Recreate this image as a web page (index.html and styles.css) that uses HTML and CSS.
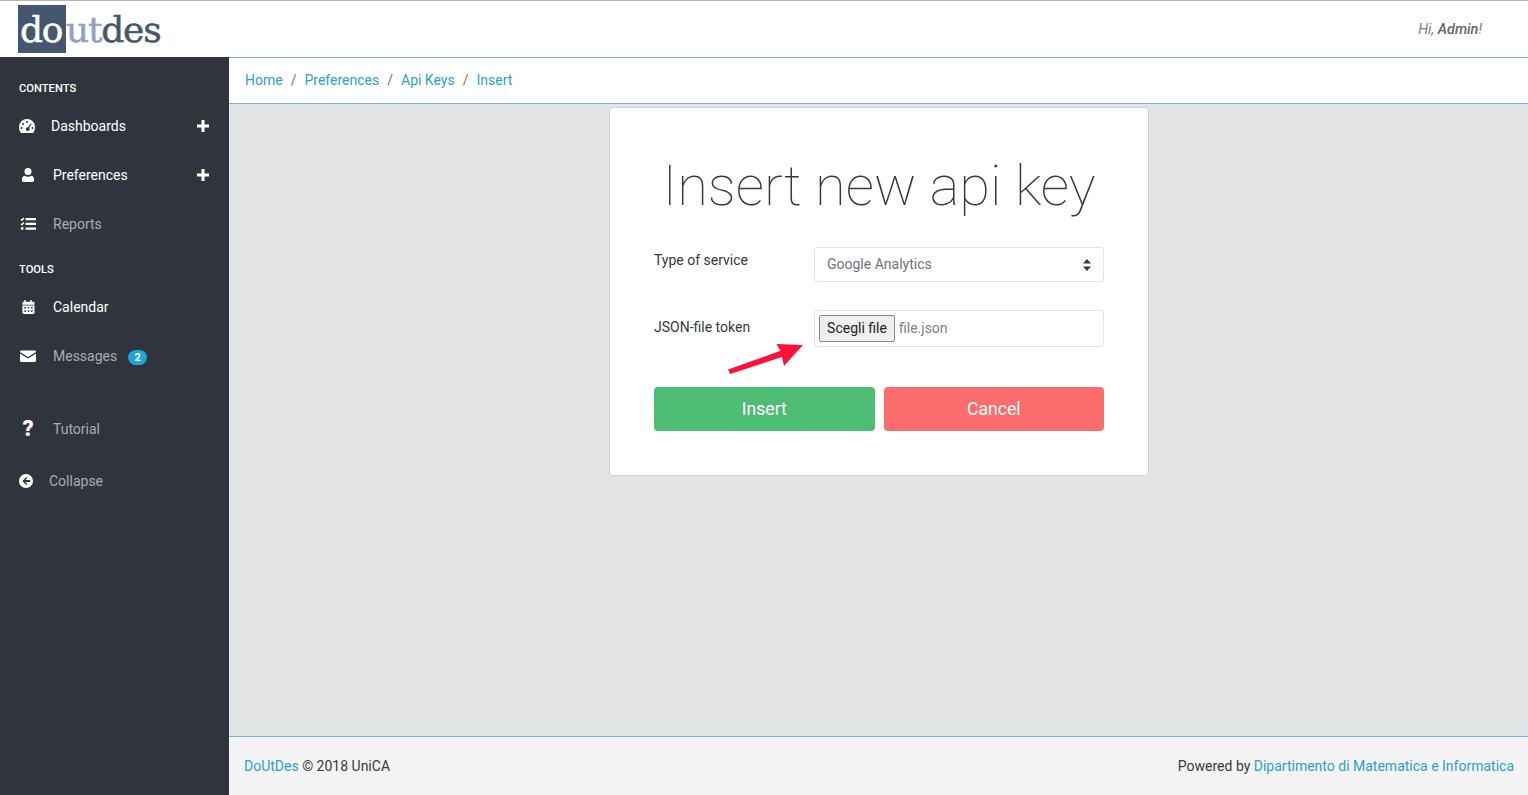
FILE: index.html
```html
<!DOCTYPE html>
<html lang="en">
<head>
    <meta charset="UTF-8">
    <meta name="viewport" content="width=device-width, initial-scale=1.0">
    <title>DoUtDes - Insert new api key</title>
    <link rel="stylesheet" href="styles.css">
</head>
<body>

    <header class="topbar">
        <a class="logo" href="#"><span class="logo-box">do</span><span class="logo-ut">ut</span><span class="logo-des">des</span></a>
        <div class="greeting">Hi, <b>Admin</b>!</div>
    </header>

    <div class="page">
        <nav class="sidebar">
            <div class="nav-title nav-title-first">Contents</div>
            <a class="nav-item nav-open" href="#">
                <svg class="nav-icon icon-gauge" viewBox="0 0 16 14"><path fill="#fff" fill-rule="evenodd" d="M8 0a8 8 0 0 1 8 8c0 2-.6 4-1.600 5.400-.2.4-.5.6-.9.6H2.500c-.4 0-.7-.2-.9-.6A9.500 9.500 0 0 1 0 8a8 8 0 0 1 8-8zM8 2a1 1 0 1 0 0 2 1 1 0 0 0 0-2zM4 4a1 1 0 1 0 0 2 1 1 0 0 0 0-2zM12 4.500 9 8.200a1.800 1.800 0 1 0 1.200.7l2.600-3.900zM2.500 8a1 1 0 1 0 0 2 1 1 0 0 0 0-2zM13.500 8a1 1 0 1 0 0 2 1 1 0 0 0 0-2z"/></svg>
                <span>Dashboards</span>
                <svg class="nav-plus" viewBox="0 0 12 12"><path fill="#fff" d="M4.500 0h3v4.500H12v3H7.500V12h-3V7.500H0v-3h4.500z"/></svg>
            </a>
            <a class="nav-item nav-open" href="#">
                <svg class="nav-icon" viewBox="0 0 18 14"><path fill="#fff" d="M9 0a3.500 3.500 0 1 1 0 7 3.500 3.500 0 0 1 0-7zM5.500 7.800c1 .6 2.200.9 3.500.9s2.500-.3 3.500-.9c1.700.2 2.500 1.700 2.500 3.300v1.500c0 .8-.6 1.400-1.400 1.400H4.400C3.600 14 3 13.400 3 12.600v-1.500c0-1.600.8-3.100 2.500-3.300z"/></svg>
                <span>Preferences</span>
                <svg class="nav-plus" viewBox="0 0 12 12"><path fill="#fff" d="M4.500 0h3v4.500H12v3H7.500V12h-3V7.500H0v-3h4.500z"/></svg>
            </a>
            <a class="nav-item" href="#">
                <svg class="nav-icon" viewBox="0 0 18 14"><path fill="none" stroke="#fff" stroke-width="1.300" d="M2 2.200l1 1 1.800-2.200M2 6.700l1 1 1.800-2.200"/><circle cx="3.200" cy="11.500" r="1.400" fill="#fff"/><path fill="#fff" d="M6.500 1h10.500v2.200H6.500zM6.500 5.800h10.500V8H6.500zM6.500 10.500h10.500v2.200H6.500z"/></svg>
                <span>Reports</span>
            </a>

            <div class="nav-title">Tools</div>
            <a class="nav-item nav-open" href="#">
                <svg class="nav-icon" viewBox="0 0 18 15"><path fill="#fff" fill-rule="evenodd" d="M5 0h1.500v2h5V0H13v2h1.500c.8 0 1.500.7 1.500 1.500V5H3V3.500C3 2.700 3.700 2 4.500 2H5zM3 6h13v7.500c0 .8-.7 1.500-1.500 1.500h-10C3.700 15 3 14.300 3 13.500zM5 7.500V9h1.800V7.500zM8.600 7.500V9h1.800V7.500zM12.200 7.500V9H14V7.500zM5 11v1.500h1.800V11zM8.600 11v1.500h1.800V11zM12.200 11v1.500H14V11z"/></svg>
                <span>Calendar</span>
            </a>
            <a class="nav-item" href="#">
                <svg class="nav-icon" viewBox="0 0 18 14"><path fill="#fff" d="M2.500 1.500h13c.8 0 1.500.6 1.500 1.400L9 8 1 2.900c0-.8.700-1.400 1.500-1.400zM1 4.400 9 9.500l8-5.100v7.100c0 .8-.7 1.500-1.500 1.500h-13c-.8 0-1.500-.7-1.500-1.500z"/></svg>
                <span>Messages</span>
                <span class="badge">2</span>
            </a>

            <a class="nav-item nav-tutorial" href="#">
                <span class="nav-icon nav-question">?</span>
                <span>Tutorial</span>
            </a>
            <a class="nav-item nav-collapse" href="#">
                <svg class="nav-icon icon-small" viewBox="0 0 14 14"><path fill="#fff" fill-rule="evenodd" d="M7 0a7 7 0 1 1 0 14A7 7 0 0 1 7 0zM7.400 2.900 3.300 7l4.100 4.100 1-1-2.100-2.100h4.900V6H6.300l2.100-2.100z"/></svg>
                <span>Collapse</span>
            </a>
        </nav>

        <div class="main">
            <ol class="breadcrumb">
                <li><a href="#">Home</a></li>
                <li><a href="#">Preferences</a></li>
                <li><a href="#">Api Keys</a></li>
                <li><a href="#">Insert</a></li>
            </ol>

            <div class="content">
                <form class="card" action="">
                    <h1>Insert new api key</h1>

                    <div class="form-row">
                        <label>Type of service</label>
                        <div class="select-box">
                            <span>Google Analytics</span>
                            <svg class="select-arrows" viewBox="0 0 8 12"><path fill="#343a40" d="M4 0 8 4.600H0zM4 12 0 7.400h8z"/></svg>
                        </div>
                    </div>

                    <div class="form-row form-row-file">
                        <label>JSON-file token</label>
                        <div class="file-box">
                            <button type="button" class="file-btn">Scegli file</button>
                            <span>file.json</span>
                        </div>
                        <svg class="red-arrow" viewBox="0 0 80 32"><path fill="#fa1239" d="M0 27.500 52.500 8.800 48.500 2 75 3 56 24 54 15 2 32z"/></svg>
                    </div>

                    <div class="actions">
                        <button type="button" class="btn btn-insert">Insert</button>
                        <button type="button" class="btn btn-cancel">Cancel</button>
                    </div>
                </form>
            </div>

            <footer class="footer">
                <div><a href="#">DoUtDes</a> © 2018 UniCA</div>
                <div>Powered by <a href="#">Dipartimento di Matematica e Informatica</a></div>
            </footer>
        </div>
    </div>

</body>
</html>
```

FILE: styles.css
```css
* {
    box-sizing: border-box;
}

html, body {
    height: 100%;
}

body {
    margin: 0;
    display: flex;
    flex-direction: column;
    height: 795px;
    overflow: hidden;
    font-family: Roboto, "Liberation Sans", sans-serif;
    font-size: 14px;
    color: #343a40;
    background: #e3e4e6;
}

a {
    color: #2a9fd6;
    text-decoration: none;
}

/* top bar */
.topbar {
    flex: none;
    display: flex;
    align-items: center;
    justify-content: space-between;
    height: 57px;
    padding: 0 46px 0 18px;
    background: #fff;
    border-top: 1px solid #b5b5b5;
}

.logo {
    display: flex;
    align-items: flex-start;
    height: 48px;
    font-family: "DejaVu Serif", serif;
    font-size: 36px;
    letter-spacing: -1.200px;
    line-height: 50px;
    -webkit-text-stroke: 0.500px;
}

.logo-box {
    width: 48px;
    height: 48px;
    padding-left: 2px;
    background: #45566f;
    color: #fff;
}

.logo-ut {
    color: #8fa3bd;
}

.logo-des {
    color: #45566f;
}

.greeting {
    margin-top: 1px;
    font-size: 14.400px;
    font-style: italic;
    color: #7c7f83;
}

.greeting b {
    font-weight: 500;
    color: #62666b;
}

.page {
    flex: 1;
    display: flex;
    min-height: 0;
}

/* sidebar */
.sidebar {
    flex: none;
    width: 229px;
    padding-top: 23px;
    background: #30353d;
}

.nav-title {
    height: 18px;
    margin: 13px 0 3px;
    padding-left: 19px;
    font-size: 11.200px;
    font-weight: 500;
    line-height: 18px;
    text-transform: uppercase;
    color: #fff;
}

.nav-title-first {
    margin-top: 0;
}

.nav-item {
    display: flex;
    align-items: center;
    gap: 16px;
    height: 49px;
    padding: 0 20px 0 19px;
    color: #a9adb3;
}

.nav-open {
    color: #fff;
}

.nav-icon {
    flex: none;
    width: 18px;
    height: 14px;
}

.icon-gauge {
    width: 16px;
}

.icon-small {
    width: 14px;
}

.nav-plus {
    flex: none;
    width: 12px;
    height: 12px;
    margin-left: auto;
}

.nav-question {
    height: auto;
    font-size: 22px;
    font-weight: 900;
    line-height: 1;
    text-align: center;
    color: #fff;
}

.nav-tutorial {
    margin-top: 24px;
}

.nav-collapse {
    margin-top: 3px;
}

.badge {
    margin-left: -5px;
    width: 19px;
    height: 15px;
    margin-top: 4px;
    border-radius: 8px;
    background: #1fa5dc;
    color: #fff;
    font-size: 11px;
    font-weight: 700;
    line-height: 15px;
    text-align: center;
}

/* main column */
.main {
    flex: 1;
    display: flex;
    flex-direction: column;
    min-width: 0;
}

.breadcrumb {
    flex: none;
    display: flex;
    align-items: center;
    height: 47px;
    margin: 0;
    padding: 0 16px 2px;
    list-style: none;
    background: #fff;
    border-top: 1px solid #6fb7d4;
    border-bottom: 1px solid #6fb7d4;
}

.breadcrumb li + li::before {
    content: "/";
    padding: 0 8px;
    color: #6c757d;
}

.content {
    flex: 1;
    display: flex;
    justify-content: center;
    align-items: flex-start;
    padding: 3px 0 0 0;
}

.card {
    width: 540px;
    height: 369px;
    margin-right: -1px;
    padding: 0 44px;
    background: #fff;
    border: 1px solid #cfd1d6;
    border-radius: 4px;
}

h1 {
    margin: 45px 0 28px;
    font-size: 56px;
    font-weight: 100;
    line-height: 66px;
    text-align: center;
    color: #343a40;
}

.form-row {
    display: flex;
    margin-bottom: 28px;
}

.form-row label {
    flex: none;
    width: 160px;
    padding-top: 5px;
}

.form-row-file {
    position: relative;
    margin-bottom: 40px;
}

.form-row-file label {
    padding-top: 9px;
}

.select-box {
    flex: 1;
    display: flex;
    align-items: center;
    justify-content: space-between;
    height: 35px;
    padding: 0 12px 2px;
    border: 1px solid #e1e3e6;
    border-radius: 3px;
    color: #6c757d;
}

.select-arrows {
    width: 8px;
    height: 12px;
    margin-top: 2px;
}

.file-box {
    flex: 1;
    display: flex;
    align-items: center;
    gap: 4px;
    height: 37px;
    padding: 0 4px;
    border: 1px solid #e1e3e6;
    border-radius: 3px;
    color: #7b7f84;
}

.file-box span {
    margin-bottom: 2px;
}

.file-btn {
    width: 76px;
    height: 27px;
    padding: 0 0 2px;
    font: inherit;
    color: #222;
    background: #efefef;
    border: 1px solid #8a8a8a;
    border-radius: 2px;
}

.red-arrow {
    position: absolute;
    left: 74px;
    top: 32px;
    width: 80px;
    height: 32px;
}

.actions {
    display: flex;
    gap: 9px;
}

.btn {
    flex: 1;
    height: 44px;
    padding: 0;
    font: inherit;
    font-size: 17.600px;
    color: #fff;
    border: 0;
    border-radius: 4px;
}

.btn-insert {
    background: #4dbd74;
}

.btn-cancel {
    background: #fb6c6c;
}

/* footer */
.footer {
    flex: none;
    display: flex;
    align-items: center;
    justify-content: space-between;
    height: 59px;
    padding: 0 14px 0 15px;
    background: #f4f4f4;
    border-top: 1px solid #6fb7d4;
    color: #343a40;
}
```
